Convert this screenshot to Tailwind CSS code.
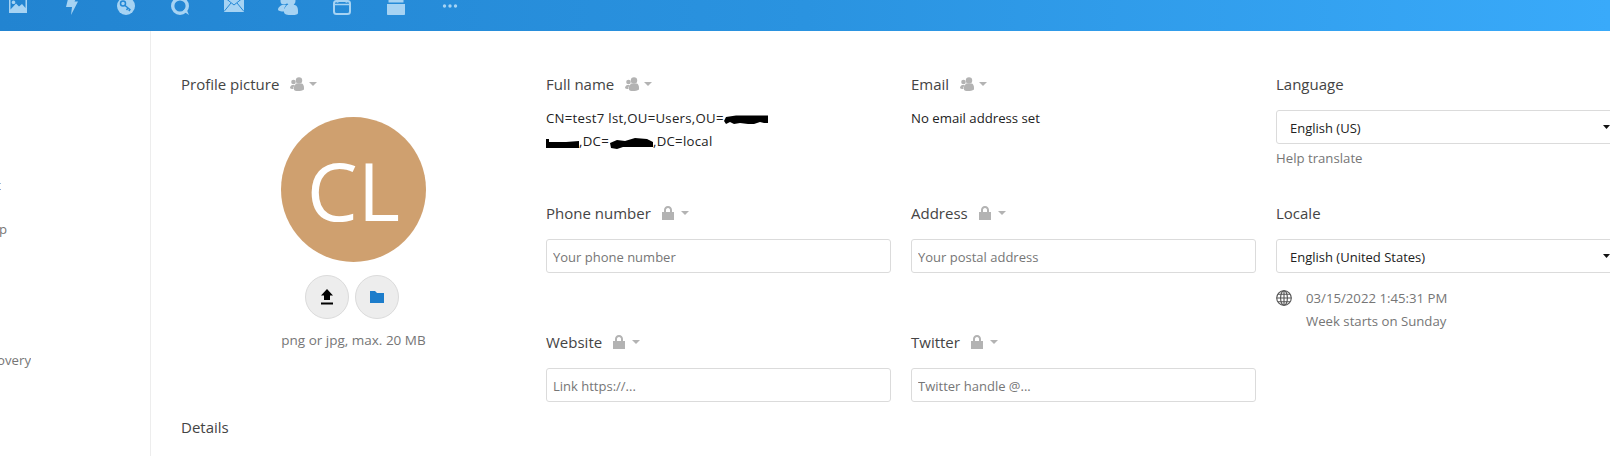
<!DOCTYPE html>
<html lang="en">
<head>
  <meta charset="UTF-8">
  <title>Personal info</title>
  <script src="https://cdn.jsdelivr.net/npm/@tailwindcss/browser@4"></script>
</head>
<body class="h-[456px] overflow-hidden bg-white font-['Open_Sans',sans-serif] text-[13.2px] text-[#222]">
  <!-- top bar, page is scrolled so icons get cut off at the top -->
  <header class="h-[31px] overflow-hidden bg-gradient-to-r from-[#2284d1] via-[#2a93e0] to-[#39aafa]">
    <nav class="-mt-[5px] -ml-[9px] flex text-[#a6d3f3]">
      <div class="flex w-[54px] justify-center">
        <svg width="20" height="20" viewBox="0 -5 20 20" fill="currentColor"><path fill-rule="evenodd" d="M1-5H19V13H1ZM2.500-5V9.500L8 3.500L11 6.500L14 4L17.500 8V-5ZM5.500 0.500a1.800 1.800 0 1 0 .01 0Z"/></svg>
      </div>
      <div class="flex w-[54px] justify-center">
        <svg width="20" height="20" viewBox="0 -5 20 20" fill="currentColor"><path d="M7-5H16L12.500 1.500H16L9 15L10 7H4Z"/></svg>
      </div>
      <div class="flex w-[54px] justify-center">
        <svg width="20" height="20" viewBox="0 -5 20 20"><circle cx="10" cy="6" r="9" fill="currentColor"/><circle cx="7" cy="3.500" r="2.500" fill="none" stroke="#2488d6" stroke-width="1.500"/><path d="M9 5.500L14.500 10M12 8L10.500 10M14 9.500L12.800 11" fill="none" stroke="#2488d6" stroke-width="1.500"/></svg>
      </div>
      <div class="flex w-[54px] justify-center">
        <svg width="20" height="20" viewBox="0 -5 20 20"><circle cx="10" cy="6" r="7.300" fill="none" stroke="currentColor" stroke-width="3.400"/><path d="M13 11L19 15L16 8Z" fill="currentColor"/></svg>
      </div>
      <div class="flex w-[54px] justify-center">
        <svg width="20" height="20" viewBox="0 -5 20 20"><path d="M0-5H20V12H0Z" fill="currentColor"/><path d="M0-3L10 5L20-3M0 11.500L7 3M20 11.500L13 3" fill="none" stroke="#2488d6" stroke-width="1"/></svg>
      </div>
      <div class="flex w-[54px] justify-center">
        <svg width="20" height="20" viewBox="0 -5 20 20" fill="currentColor"><circle cx="13" cy="1" r="4.500"/><path d="M9 5H17C19 5.500 20 8 20 11V13C20 14.500 18 15 14 15C9 15 6 14.500 6 12V9Z"/><circle cx="6" cy="1" r="3.500"/><path d="M4 5H8L6 8.500L6 11.500C3 11.500 0 11 0 9.500C0 7.500 2 6 4 5Z"/></svg>
      </div>
      <div class="flex w-[54px] justify-center">
        <svg width="20" height="20" viewBox="0 -5 20 20" fill="none" stroke="currentColor"><rect x="2" y="1" width="16" height="13" rx="2.500" stroke-width="2"/><path d="M2 4.500H18" stroke-width="1.500"/><circle cx="5.500" cy="1.500" r="1.300" fill="currentColor" stroke="none"/><circle cx="14.500" cy="1.500" r="1.300" fill="currentColor" stroke="none"/></svg>
      </div>
      <div class="flex w-[54px] justify-center">
        <svg width="20" height="20" viewBox="0 -5 20 20" fill="currentColor"><path d="M2.500-5H17.500V2.500H2.500ZM1 4H19V14C19 14.600 18.600 15 18 15H2C1.400 15 1 14.600 1 14Z"/></svg>
      </div>
      <div class="flex w-[54px] justify-center">
        <svg width="20" height="20" viewBox="0 -5 20 20" fill="currentColor"><circle cx="4.500" cy="6" r="1.700"/><circle cx="10" cy="6" r="1.700"/><circle cx="15.500" cy="6" r="1.700"/></svg>
      </div>
    </nav>
  </header>

  <div class="flex h-[425px] overflow-hidden">
    <!-- sidebar, mostly scrolled off to the left -->
    <aside class="w-[151px] shrink-0 border-r border-[#ededed] text-[#767676]">
      <div class="mt-[143px] flex w-[1px] justify-end overflow-hidden leading-[22px] whitespace-nowrap">Account</div>
      <div class="mt-[22px] flex w-[7px] justify-end overflow-hidden leading-[22px] whitespace-nowrap">Mobile &amp; desktop</div>
      <div class="mt-[109px] flex w-[31px] justify-end overflow-hidden leading-[22px] whitespace-nowrap">Data recovery</div>
    </aside>

    <main class="flex shrink-0 gap-x-5 pt-[43px] pl-[30px]">
      <!-- profile picture column -->
      <section class="w-[345px] shrink-0">
        <h3 class="flex h-5 items-center text-[15px] font-normal text-[#444]">
          Profile picture
          <svg class="ml-[11px] text-[#b3b3b3]" width="14" height="14" viewBox="0 0 14 14" fill="currentColor"><circle cx="9" cy="3.500" r="3.200"/><path d="M6 6.500H12C13.500 7.500 14 9 14 11V12.500C12.500 13.500 10 14 8 14C6 14 4 13.700 4 12.500V9.500Z"/><circle cx="3.500" cy="5" r="2.300"/><path d="M2 8H5L3.500 10V12C1.500 12 0 11.500 0 11C0 9.500 1 8.500 2 8Z"/></svg>
          <svg class="ml-[5px] text-[#b3b3b3]" width="8" height="4" viewBox="0 0 8 4" fill="currentColor"><path d="M0 0H8L4 4Z"/></svg>
        </h3>
        <div class="mt-[23px] flex flex-col items-center">
          <div class="flex h-[145px] w-[145px] items-center justify-center rounded-full bg-[#cfa06f] text-[81px] font-normal text-white">CL</div>
          <div class="mt-[13px] flex gap-1.5 pr-[3px]">
            <button class="flex h-11 w-11 items-center justify-center rounded-full border border-[#dbdbdb] bg-[#ededed]">
              <svg width="14" height="16" viewBox="0 0 14 16" fill="#000"><path d="M7 0L13 6.500H10V11H4V6.500H1ZM1 13.500H13V15.500H1Z"/></svg>
            </button>
            <button class="flex h-11 w-11 items-center justify-center rounded-full border border-[#dbdbdb] bg-[#ededed]">
              <svg width="14" height="12" viewBox="0 0 14 12" fill="#1d7dcb"><path d="M0 0H5L7 2H14V12H0Z"/></svg>
            </button>
          </div>
          <p class="mt-[11px] text-[13.500px] leading-[20px] text-[#767676]">png or jpg, max. 20 MB</p>
        </div>
        <h3 class="mt-[67px] h-5 text-[15px] leading-5 font-normal text-[#444]">Details</h3>
      </section>

      <!-- fields -->
      <div class="grid grid-cols-[345px_345px_345px] auto-rows-[129px] gap-x-5">
        <div>
          <h3 class="flex h-5 items-center text-[15px] text-[#444]">
            Full name
            <svg class="ml-[11px] text-[#b3b3b3]" width="14" height="14" viewBox="0 0 14 14" fill="currentColor"><circle cx="9" cy="3.500" r="3.200"/><path d="M6 6.500H12C13.500 7.500 14 9 14 11V12.500C12.500 13.500 10 14 8 14C6 14 4 13.700 4 12.500V9.500Z"/><circle cx="3.500" cy="5" r="2.300"/><path d="M2 8H5L3.500 10V12C1.500 12 0 11.500 0 11C0 9.500 1 8.500 2 8Z"/></svg>
            <svg class="ml-[5px] text-[#b3b3b3]" width="8" height="4" viewBox="0 0 8 4" fill="currentColor"><path d="M0 0H8L4 4Z"/></svg>
          </h3>
          <p class="mt-[13px] w-[240px] leading-[23.4px] tracking-[0.28px]">
            CN=test7 lst,OU=Users,OU=<svg class="inline-block align-[-3px]" width="44" height="11" viewBox="0 0 44 11" fill="#000"><path d="M2 2L12 .5H44V8H40L36 7L30 9H24L16 8L10 9L6 7L2 9L0 6Z"/></svg>
            <svg class="inline-block align-[-3px]" width="33" height="10" viewBox="0 0 33 10" fill="#000"><path d="M0 0H3V3H20L33 2V9H0Z"/></svg>,DC=<svg class="inline-block align-[-3px]" width="44" height="11" viewBox="0 0 44 11" fill="#000"><path d="M1 5L8 2L16 3L26 0L38 1L44 4V9H26L14 9L8 11L2 10Z"/></svg>,DC=local
          </p>
        </div>
        <div>
          <h3 class="flex h-5 items-center text-[15px] text-[#444]">
            Email
            <svg class="ml-[11px] text-[#b3b3b3]" width="14" height="14" viewBox="0 0 14 14" fill="currentColor"><circle cx="9" cy="3.500" r="3.200"/><path d="M6 6.500H12C13.500 7.500 14 9 14 11V12.500C12.500 13.500 10 14 8 14C6 14 4 13.700 4 12.500V9.500Z"/><circle cx="3.500" cy="5" r="2.300"/><path d="M2 8H5L3.500 10V12C1.500 12 0 11.500 0 11C0 9.500 1 8.500 2 8Z"/></svg>
            <svg class="ml-[5px] text-[#b3b3b3]" width="8" height="4" viewBox="0 0 8 4" fill="currentColor"><path d="M0 0H8L4 4Z"/></svg>
          </h3>
          <p class="mt-[13px] leading-[23.4px]">No email address set</p>
        </div>
        <div>
          <h3 class="flex h-5 items-center text-[15px] text-[#444]">Language</h3>
          <div class="relative mt-[16px] h-[34px]">
            <select class="h-full w-full appearance-none rounded-[3px] border border-[#dbdbdb] bg-white pt-1 pl-[13px] text-[13px] text-[#222]"><option>English (US)</option></select>
            <svg class="absolute top-[15px] right-[11px]" width="7" height="4" viewBox="0 0 7 4" fill="#111"><path d="M0 0H7L3.500 4Z"/></svg>
          </div>
          <p class="mt-[4px] leading-[20px] text-[#767676]">Help translate</p>
        </div>

        <div>
          <h3 class="flex h-5 items-center text-[15px] text-[#444]">
            Phone number
            <svg class="ml-[11px] text-[#b3b3b3]" width="12" height="14" viewBox="0 0 12 14" fill="currentColor"><path fill-rule="evenodd" d="M6 0C8.500 0 10 1.800 10 4V6H12V14H0V6H2V4C2 1.800 3.500 0 6 0ZM6 2C4.600 2 4 3 4 4V6H8V4C8 3 7.400 2 6 2Z"/></svg>
            <svg class="ml-[7px] text-[#b3b3b3]" width="8" height="4" viewBox="0 0 8 4" fill="currentColor"><path d="M0 0H8L4 4Z"/></svg>
          </h3>
          <input class="mt-[16px] h-[34px] w-full rounded-[3px] border border-[#dbdbdb] px-1.5 pt-0.5 text-[13px] placeholder:text-[#767676]" placeholder="Your phone number">
        </div>
        <div>
          <h3 class="flex h-5 items-center text-[15px] text-[#444]">
            Address
            <svg class="ml-[11px] text-[#b3b3b3]" width="12" height="14" viewBox="0 0 12 14" fill="currentColor"><path fill-rule="evenodd" d="M6 0C8.500 0 10 1.800 10 4V6H12V14H0V6H2V4C2 1.800 3.500 0 6 0ZM6 2C4.600 2 4 3 4 4V6H8V4C8 3 7.400 2 6 2Z"/></svg>
            <svg class="ml-[7px] text-[#b3b3b3]" width="8" height="4" viewBox="0 0 8 4" fill="currentColor"><path d="M0 0H8L4 4Z"/></svg>
          </h3>
          <input class="mt-[16px] h-[34px] w-full rounded-[3px] border border-[#dbdbdb] px-1.5 pt-0.5 text-[13px] placeholder:text-[#767676]" placeholder="Your postal address">
        </div>
        <div>
          <h3 class="flex h-5 items-center text-[15px] text-[#444]">Locale</h3>
          <div class="relative mt-[16px] h-[34px]">
            <select class="h-full w-full appearance-none rounded-[3px] border border-[#dbdbdb] bg-white pt-1 pl-[13px] text-[13px] text-[#222]"><option>English (United States)</option></select>
            <svg class="absolute top-[15px] right-[11px]" width="7" height="4" viewBox="0 0 7 4" fill="#111"><path d="M0 0H7L3.500 4Z"/></svg>
          </div>
          <div class="mt-[14px] flex gap-[14px] text-[#767676]">
            <svg class="mt-[3px]" width="16" height="16" viewBox="0 0 16 16" fill="none" stroke="#555" stroke-width="1.100"><circle cx="8" cy="8" r="7.300"/><ellipse cx="8" cy="8" rx="3.400" ry="7.300"/><path d="M8 .7V15.300M.7 8H15.300M1.800 4.300H14.200M1.800 11.700H14.200"/></svg>
            <div class="leading-[23px]">
              <p>03/15/2022 1:45:31 PM</p>
              <p>Week starts on Sunday</p>
            </div>
          </div>
        </div>

        <div>
          <h3 class="flex h-5 items-center text-[15px] text-[#444]">
            Website
            <svg class="ml-[11px] text-[#b3b3b3]" width="12" height="14" viewBox="0 0 12 14" fill="currentColor"><path fill-rule="evenodd" d="M6 0C8.500 0 10 1.800 10 4V6H12V14H0V6H2V4C2 1.800 3.500 0 6 0ZM6 2C4.600 2 4 3 4 4V6H8V4C8 3 7.400 2 6 2Z"/></svg>
            <svg class="ml-[7px] text-[#b3b3b3]" width="8" height="4" viewBox="0 0 8 4" fill="currentColor"><path d="M0 0H8L4 4Z"/></svg>
          </h3>
          <input class="mt-[16px] h-[34px] w-full rounded-[3px] border border-[#dbdbdb] px-1.5 pt-0.5 text-[13px] placeholder:text-[#767676]" placeholder="Link https://...">
        </div>
        <div>
          <h3 class="flex h-5 items-center text-[15px] text-[#444]">
            Twitter
            <svg class="ml-[11px] text-[#b3b3b3]" width="12" height="14" viewBox="0 0 12 14" fill="currentColor"><path fill-rule="evenodd" d="M6 0C8.500 0 10 1.800 10 4V6H12V14H0V6H2V4C2 1.800 3.500 0 6 0ZM6 2C4.600 2 4 3 4 4V6H8V4C8 3 7.400 2 6 2Z"/></svg>
            <svg class="ml-[7px] text-[#b3b3b3]" width="8" height="4" viewBox="0 0 8 4" fill="currentColor"><path d="M0 0H8L4 4Z"/></svg>
          </h3>
          <input class="mt-[16px] h-[34px] w-full rounded-[3px] border border-[#dbdbdb] px-1.5 pt-0.5 text-[13px] placeholder:text-[#767676]" placeholder="Twitter handle @...">
        </div>
      </div>
    </main>
  </div>
</body>
</html>
